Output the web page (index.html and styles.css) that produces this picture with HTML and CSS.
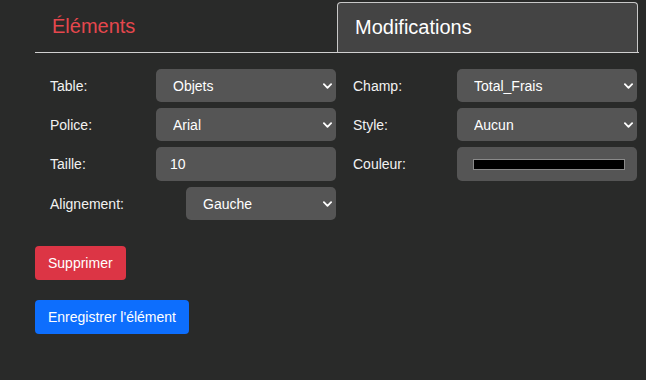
FILE: index.html
```html
<!DOCTYPE html>
<html lang="fr">
<head>
    <meta charset="UTF-8">
    <meta name="viewport" content="width=device-width, initial-scale=1.0">
    <title>Modifications</title>
    <link rel="stylesheet" href="styles.css">
</head>
<body>
    <div class="panel">
        <div class="tabs">
            <div class="tab tab-link">Éléments</div>
            <div class="tab tab-active">Modifications</div>
        </div>

        <div class="form">
            <div class="col">
                <div class="row">
                    <label>Table:</label>
                    <div class="select-wrap">
                        <select><option>Objets</option></select>
                        <svg class="chevron" viewBox="0 0 10 6"><path d="M1 1l4 4 4-4"/></svg>
                    </div>
                </div>
                <div class="row">
                    <label>Police:</label>
                    <div class="select-wrap">
                        <select><option>Arial</option></select>
                        <svg class="chevron" viewBox="0 0 10 6"><path d="M1 1l4 4 4-4"/></svg>
                    </div>
                </div>
                <div class="row">
                    <label>Taille:</label>
                    <input class="field" type="text" value="10">
                </div>
                <div class="row">
                    <label>Alignement:</label>
                    <div class="select-wrap narrow">
                        <select><option>Gauche</option></select>
                        <svg class="chevron" viewBox="0 0 10 6"><path d="M1 1l4 4 4-4"/></svg>
                    </div>
                </div>
            </div>
            <div class="col">
                <div class="row">
                    <label>Champ:</label>
                    <div class="select-wrap">
                        <select><option>Total_Frais</option></select>
                        <svg class="chevron" viewBox="0 0 10 6"><path d="M1 1l4 4 4-4"/></svg>
                    </div>
                </div>
                <div class="row">
                    <label>Style:</label>
                    <div class="select-wrap">
                        <select><option>Aucun</option></select>
                        <svg class="chevron" viewBox="0 0 10 6"><path d="M1 1l4 4 4-4"/></svg>
                    </div>
                </div>
                <div class="row">
                    <label>Couleur:</label>
                    <div class="field color-field"><span class="swatch"></span></div>
                </div>
            </div>
        </div>

        <div class="actions">
            <button class="btn btn-danger">Supprimer</button>
            <button class="btn btn-primary">Enregistrer l'élément</button>
        </div>
    </div>
</body>
</html>
```

FILE: styles.css
```css
body {
    font-family: "Liberation Sans", Arial, sans-serif;
    background-color: #292a29;
    color: #f0f0f0;
    margin: 0;
    padding: 0;
}
.panel {
    width: 604px;
    margin-left: 35px;
    padding-top: 2px;
}
.tabs {
    display: flex;
    border-bottom: 1px solid #d0d0d0;
}
.tab {
    width: 302px;
    box-sizing: border-box;
    height: 50px;
    padding: 13px 17px 0;
    font-size: 20px;
}
.tab-link {
    color: #e5474d;
}
.tab-active {
    width: 301px;
    color: #fff;
    background: #444444;
    border: 1px solid #c8c8c8;
    border-bottom: none;
    border-radius: 4px 4px 0 0;
}
.form {
    display: flex;
    gap: 17px;
    padding: 16px 0 0 15px;
}
.col {
    display: flex;
    flex-direction: column;
    gap: 6px;
}
.col:first-child {
    width: 286px;
}
.col:last-child {
    width: 284px;
}
.row {
    display: flex;
    align-items: center;
    justify-content: space-between;
    height: 33px;
    font-size: 14px;
}
.row:nth-child(3) {
    height: 34px;
}
label {
    color: #f2f2f2;
}
.select-wrap {
    position: relative;
    width: 180px;
    height: 33px;
}
.select-wrap.narrow {
    width: 150px;
}
select,
.field {
    appearance: none;
    -webkit-appearance: none;
    box-sizing: border-box;
    width: 100%;
    height: 100%;
    border: none;
    border-radius: 5px;
    background: #555555;
    color: #fff;
    font-family: inherit;
    font-size: 14px;
    padding: 0 17px;
    outline: none;
}
.field {
    width: 180px;
    height: 34px;
    padding: 0 14px;
}
.chevron {
    position: absolute;
    right: 4px;
    top: 14px;
    width: 9px;
    height: 6px;
    fill: none;
    stroke: #fff;
    stroke-width: 2;
    stroke-linecap: round;
    stroke-linejoin: round;
    pointer-events: none;
}
.color-field {
    display: flex;
    align-items: center;
    padding: 0 12px 0 16px;
}
.swatch {
    display: block;
    width: 100%;
    height: 11px;
    box-sizing: border-box;
    background: #000;
    border: 1px solid #8a8a8a;
}
.actions {
    display: flex;
    flex-direction: column;
    align-items: flex-start;
    gap: 20px;
    padding-top: 26px;
}
.btn {
    border: none;
    border-radius: 4px;
    color: #fff;
    font-family: inherit;
    font-size: 14px;
    height: 34px;
    padding: 0 13px;
}
.btn-danger {
    background: #dc3545;
}
.btn-primary {
    background: #0d6efd;
}
```
